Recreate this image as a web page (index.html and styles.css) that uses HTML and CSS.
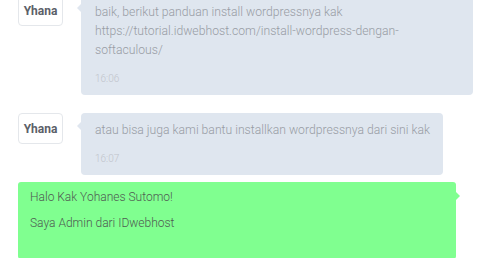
FILE: index.html
```html
<!DOCTYPE html>
<html lang="id">
<head>
<meta charset="UTF-8">
<title>Chat</title>
<link rel="stylesheet" href="styles.css">
</head>
<body>

    <section class="chat">
        <div class="history">
            <div class="msg">
                <div class="avatar">Yhana</div>
                <div class="bubble">
                    <p class="text">baik, berikut panduan install wordpressnya kak https://tutorial.idwebhost.com/install-wordpress-dengan-softaculous/</p>
                    <span class="time">16:06</span>
                </div>
            </div>

            <div class="msg">
                <div class="avatar">Yhana</div>
                <div class="bubble">
                    <p class="text">atau bisa juga kami bantu installkan wordpressnya dari sini kak</p>
                    <span class="time">16:07</span>
                </div>
            </div>
        </div>

        <div class="compose">
            <p>Halo Kak Yohanes Sutomo!</p>
            <p>Saya Admin dari IDwebhost</p>
        </div>
    </section>

</body>
</html>
```

FILE: styles.css
```css
    *{
        margin: 0;
        box-sizing: border-box;
    }

    body{
        background-color: #fff;
        font-family: Roboto, "Liberation Sans", sans-serif;
        overflow: hidden;
    }

    .chat{
        padding: 0 18px;
        margin-top: -5px;
    }

    .history{
        display: flex;
        flex-direction: column;
        gap: 18px;
    }

    .msg{
        display: flex;
        align-items: flex-start;
        gap: 18px;
    }

    .avatar{
        flex: none;
        width: 45px;
        height: 31px;
        display: flex;
        align-items: center;
        justify-content: center;
        border: 1px solid #e4e7eb;
        border-radius: 4px;
        font-size: 12px;
        font-weight: 700;
        color: #5b6068;
    }

    .bubble{
        position: relative;
        max-width: 392px;
        background: #dfe6ef;
        border-radius: 4px;
        padding: 8px 13px 9px 14px;
    }

    .bubble::before{
        content: "";
        position: absolute;
        left: -4px;
        top: 9px;
        border-style: solid;
        border-width: 4px 4px 4px 0;
        border-color: transparent #dfe6ef transparent transparent;
    }

    .text{
        font-size: 12.2px;
        line-height: 19px;
        font-weight: 300;
        color: #989ca4;
        word-break: break-word;
    }

    .time{
        display: block;
        margin-top: 11px;
        font-size: 10px;
        line-height: 15px;
        font-weight: 300;
        color: #bfc4cb;
    }

    .compose{
        position: relative;
        margin: 7px 26px 0 0;
        height: 77px;
        background: #80ff90;
        border-radius: 3px;
        padding: 6px 12px;
    }

    .compose::after{
        content: "";
        position: absolute;
        right: -4px;
        top: 10px;
        border-style: solid;
        border-width: 4px 0 4px 4px;
        border-color: transparent transparent transparent #80ff90;
    }

    .compose p{
        font-size: 12px;
        line-height: 18px;
        font-weight: 300;
        color: #4f5a52;
        margin-bottom: 8px;
    }
```
